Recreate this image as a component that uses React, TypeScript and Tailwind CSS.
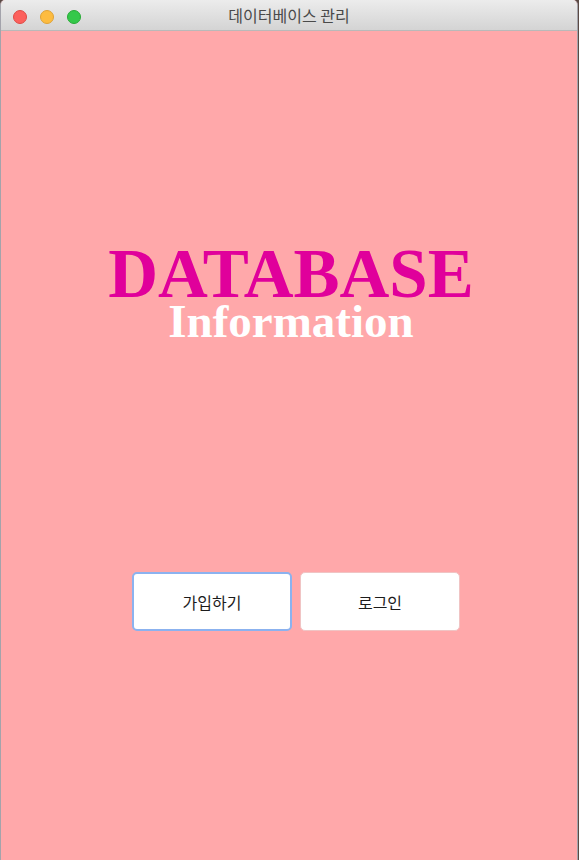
import { useState } from 'react';

const TrafficLights = () => (
  <div className="absolute left-[12px] top-[10px] flex items-center gap-[13px]">
    <span className="w-[14px] h-[14px] rounded-full bg-[#fc605c] border border-[#de4a45]" />
    <span className="w-[14px] h-[14px] rounded-full bg-[#fdbc40] border border-[#dea236]" />
    <span className="w-[14px] h-[14px] rounded-full bg-[#34c84a] border border-[#27aa35]" />
  </div>
);

export default function App() {
  const [focused, setFocused] = useState<'join' | 'login'>('join');

  const btnBase =
    "w-[160px] h-[59px] rounded-[5px] bg-white text-[16px] text-[#1c1c1c] font-['Noto_Sans_CJK_KR',sans-serif] outline-none";

  return (
    <div className="w-[579px] h-[860px] bg-[#5b4a44] overflow-hidden">
      <div className="w-[578px] h-[860px] flex flex-col rounded-t-[5px] overflow-hidden border-l border-r border-[#a3a3ab] bg-[#ffa8aa]">
        {/* Title bar */}
        <div className="relative h-[31px] shrink-0 flex items-center justify-center bg-gradient-to-b from-[#ececec] to-[#d4d4d4] border-b border-[#b9b9b9]">
          <TrafficLights />
          <span className="text-[16px] text-[#4a4a4a] font-['Noto_Sans_CJK_KR',sans-serif] leading-none">
            데이터베이스 관리
          </span>
        </div>

        {/* Content */}
        <div className="flex-1 flex flex-col items-center pt-[217px] pl-[4px]">
          <h1 className="font-['Liberation_Serif',serif] font-bold text-[69px] leading-[52px] text-[#e0009b]">
            DATABASE
          </h1>
          <h2 className="mt-[2px] font-['Liberation_Serif',serif] font-bold text-[47px] leading-[38px] text-white">
            Information
          </h2>

          <div className="mt-[232px] w-full flex justify-center gap-2 pl-[10px]">
            <button
              onClick={() => setFocused('join')}
              className={`${btnBase} ${focused === 'join' ? 'border-2 border-[#8bb2ef]' : 'border border-[#f0c4c4]'}`}
            >
              가입하기
            </button>
            <button
              onClick={() => setFocused('login')}
              className={`${btnBase} ${focused === 'login' ? 'border-2 border-[#8bb2ef]' : 'border border-[#f0c4c4]'}`}
            >
              로그인
            </button>
          </div>
        </div>
      </div>
    </div>
  );
}
